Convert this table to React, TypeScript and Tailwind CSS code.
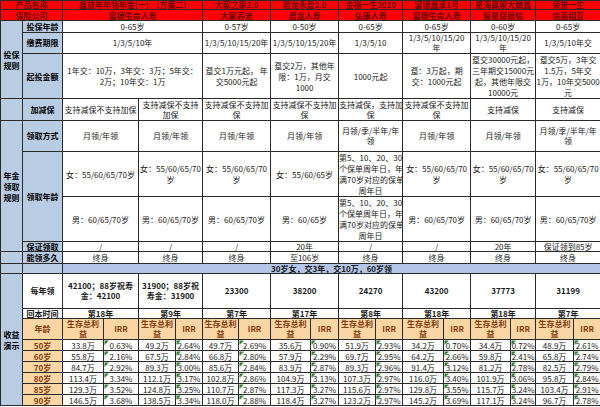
import React from 'react';

type CellProps = {
  children?: React.ReactNode;
  span?: number;
  rows?: number;
  className?: string;
};

// plain white data cell
const C = ({ children, span = 2, rows, className = '' }: CellProps) => (
  <td
    colSpan={span}
    rowSpan={rows}
    className={`border border-[#2a2a2a] p-0 text-center align-middle whitespace-pre overflow-hidden ${className}`}
  >
    {children}
  </td>
);

// blue label cell
const L = ({ children, span = 1, rows, className = '' }: CellProps) => (
  <C span={span} rows={rows} className={`bg-[#b8cce4] font-bold text-black ${className}`}>
    {children}
  </C>
);

const Red = ({ children, span = 2 }: CellProps) => (
  <C span={span} className="bg-[#ff0000] text-[#6a0000] font-bold">
    {children}
  </C>
);

const Org = ({ children, className = '' }: CellProps) => (
  <C span={1} className={`bg-[#fad6a5] text-[#843c0c] font-bold ${className}`}>
    {children}
  </C>
);

const names = ['大家之家2.0', '君龙永盈2.0', '金福一生2020', '富德鑫享1号', '星海赢家大鹏鑫', '荣誉一生'];
const companies = ['大家养老', '君龙人寿', '弘康人寿', '富德生命人寿', '复星保德信', '信美相互'];

const ages = ['50岁', '60岁', '70岁', '80岁', '85岁', '90岁'];

const demo: [string, string][][] = [
  [['33.8万', '0.63%'], ['55.8万', '2.16%'], ['84.7万', '2.92%'], ['113.4万', '3.34%'], ['129.3万', '3.52%'], ['146.5万', '3.68%']],
  [['49.2万', '2.64%'], ['67.5万', '2.84%'], ['89.3万', '3.00%'], ['112.1万', '3.17%'], ['124.8万', '3.25%'], ['138.5万', '3.34%']],
  [['49.7万', '2.69%'], ['66.8万', '2.80%'], ['85.6万', '2.84%'], ['102.8万', '2.86%'], ['110.7万', '2.87%'], ['118.0万', '2.88%']],
  [['35.6万', '0.90%'], ['57.9万', '2.29%'], ['83.9万', '2.87%'], ['104.9万', '3.13%'], ['117.3万', '3.27%'], ['118.4万', '3.27%']],
  [['51.9万', '2.93%'], ['69.7万', '2.95%'], ['89.3万', '2.96%'], ['107.3万', '2.97%'], ['115.6万', '2.97%'], ['123.2万', '2.97%']],
  [['34.2万', '0.70%'], ['64.2万', '2.66%'], ['91.4万', '3.12%'], ['116.0万', '3.40%'], ['129.8万', '3.55%'], ['145.2万', '3.69%']],
  [['34.4万', '0.72%'], ['59.8万', '2.41%'], ['81.2万', '2.78%'], ['101.9万', '3.06%'], ['115.7万', '3.24%'], ['117.1万', '3.24%']],
  [['48.9万', '2.61%'], ['65.8万', '2.74%'], ['82.5万', '2.79%'], ['95.8万', '2.84%'], ['103.4万', '2.91%'], ['96.7万', '2.78%']],
];

const payback = ['第18年', '第9年', '第7年', '第17年', '第8年', '第18年', '第18年', '第7年'];

const female = '女：55/60/65/70\n岁';
const male = '男：60/65/70岁';
const rule5 = '第5、10、20、30\n个保单周年日，年\n满70岁对应的保单\n周年日';

export default function App() {
  return (
    <div className="w-[600px] h-[407px] overflow-hidden bg-white font-['Noto_Sans_CJK_SC','Noto_Sans',sans-serif] text-[8px] leading-[10px] text-[#1a1a1a]">
      <table className="w-[600px] table-fixed border-collapse">
        <colgroup>
          <col className="w-[22px]" />
          <col className="w-[40px]" />
          <col className="w-[41px]" />
          <col className="w-[35px]" />
          <col className="w-[37px]" />
          <col className="w-[27px]" />
          <col className="w-[36px]" />
          <col className="w-[32px]" />
          <col className="w-[40px]" />
          <col className="w-[28px]" />
          <col className="w-[37px]" />
          <col className="w-[27px]" />
          <col className="w-[41px]" />
          <col className="w-[27px]" />
          <col className="w-[40px]" />
          <col className="w-[25px]" />
          <col className="w-[38px]" />
          <col className="w-[27px]" />
        </colgroup>
        <tbody>
          <tr className="h-[9px] leading-[8px]">
            <Red span={2}>产品名称</Red>
            <Red span={4}>鑫益年年领年金(一)    (方案二)</Red>
            {names.map((n) => (
              <Red key={n}>{n}</Red>
            ))}
          </tr>
          <tr className="h-[11px] leading-[9px]">
            <Red span={2}>保险公司</Red>
            <Red span={4}>富德生命人寿</Red>
            {companies.map((n) => (
              <Red key={n}>{n}</Red>
            ))}
          </tr>

          <tr className="h-[12px]">
            <L rows={3} className="leading-[11px]">{'投保\n规则'}</L>
            <L>投保年龄</L>
            <C span={4}>0-65岁</C>
            <C>0-57岁</C>
            <C>0-50岁</C>
            <C>0-65岁</C>
            <C>0-65岁</C>
            <C>0-60岁</C>
            <C>0-65岁</C>
          </tr>
          <tr className="h-[21px]">
            <L>缴费期限</L>
            <C span={4}>1/3/5/10年</C>
            <C>1/3/5/10/15/20年</C>
            <C>1/3/5/10/15/20年</C>
            <C>1/3/5/10</C>
            <C>{'1/3/5/10/15/20\n年'}</C>
            <C>{'1/3/5/10/15/20\n年'}</C>
            <C>1/3/5/10年交</C>
          </tr>
          <tr className="h-[45px] leading-[11px]">
            <L>起投金额</L>
            <C span={4}>{'1年交：10万，3年交：3万；5年交：\n2万；10年交：1万'}</C>
            <C>{'趸交1万元起， 年\n交5000元起'}</C>
            <C>{'趸交2万，其他年\n限：1万，月交\n1000'}</C>
            <C>1000元起</C>
            <C>{'趸：3万起，期\n交：1000元起'}</C>
            <C>{'趸交30000元起，\n三年期交15000元\n起，其他年限交\n10000元'}</C>
            <C>{'趸交5万，3年交\n1.5万，5年交\n1万，10年交5000\n元'}</C>
          </tr>
          <tr className="h-[22px]">
            <L />
            <L>加减保</L>
            <C>支持减保不支持加保</C>
            <C>{'支持减保不支持\n加保'}</C>
            <C>{'支持减保不支持加\n保'}</C>
            <C>{'支持减保不支持加\n保'}</C>
            <C>{'支持减保，支持加\n保'}</C>
            <C>{'支持减保不支持加\n保'}</C>
            <C>支持减保</C>
            <C>支持减保</C>
          </tr>

          <tr className="h-[31px]">
            <L rows={4} className="leading-[11px]">{'年金\n领取\n规则'}</L>
            <L>领取方式</L>
            <C>月领/年领</C>
            <C>月领/年领</C>
            <C>月领/年领</C>
            <C>月领/年领</C>
            <C>{'月领/季/半年/年\n领'}</C>
            <C>月领/年领</C>
            <C>月领/年领</C>
            <C>{'月领/季/半年/年\n领'}</C>
          </tr>
          <tr className="h-[45px] leading-[11px]">
            <L rows={2}>领取年龄</L>
            <C>女：55/60/65/70岁</C>
            <C>{female}</C>
            <C>{female}</C>
            <C>女：55/60/65岁</C>
            <C>{rule5}</C>
            <C>{female}</C>
            <C>{female}</C>
            <C>{female}</C>
          </tr>
          <tr className="h-[45px] leading-[11px]">
            <C>{male}</C>
            <C>{male}</C>
            <C>{male}</C>
            <C>男：60/65岁</C>
            <C>{rule5}</C>
            <C>{male}</C>
            <C>{male}</C>
            <C>{male}</C>
          </tr>
          <tr className="h-[10px] leading-[8px]">
            <L>保证领取</L>
            <C>/</C>
            <C>/</C>
            <C>/</C>
            <C>20年</C>
            <C>/</C>
            <C>/</C>
            <C>20年</C>
            <C>保证领到85岁</C>
          </tr>
          <tr className="h-[12px] leading-[9px]">
            <L />
            <L>能领多久</L>
            <C>终身</C>
            <C>终身</C>
            <C>终身</C>
            <C>至106岁</C>
            <C>终身</C>
            <C>终身</C>
            <C>终身</C>
            <C>终身</C>
          </tr>

          <tr className="h-[10px] leading-[8px]">
            <L />
            <L />
            <C span={16} className="bg-[#b4c6e7] font-bold">
              30岁女，交3年，交10万，60岁领
            </C>
          </tr>

          <tr className="h-[35px] font-bold">
            <L rows={9} className="leading-[11px]">{'收益\n演示'}</L>
            <C span={1}>每年领</C>
            <C>{'42100；88岁祝寿\n金：42100'}</C>
            <C>{'31900；88岁祝\n寿金：31900'}</C>
            <C>23300</C>
            <C>38200</C>
            <C>24270</C>
            <C>43200</C>
            <C>37773</C>
            <C>31199</C>
          </tr>
          <tr className="h-[10px] leading-[8px] font-bold">
            <C span={1}>回本时间</C>
            {payback.map((p, i) => (
              <C key={i}>{p}</C>
            ))}
          </tr>
          <tr className="h-[21px]">
            <Org>年龄</Org>
            {payback.map((_, i) => (
              <React.Fragment key={i}>
                <Org>{'生存总利\n益'}</Org>
                <Org>IRR</Org>
              </React.Fragment>
            ))}
          </tr>
          {ages.map((age, r) => (
            <tr key={age} className="h-[11px] leading-[9px]">
              <Org>{age}</Org>
              {demo.map((p, i) => (
                <React.Fragment key={i}>
                  <C span={1}>{p[r][0]}</C>
                  <C span={1} className="bg-[linear-gradient(135deg,#2e7d32_3px,transparent_3px)]">
                    {p[r][1]}
                  </C>
                </React.Fragment>
              ))}
            </tr>
          ))}
        </tbody>
      </table>
    </div>
  );
}
